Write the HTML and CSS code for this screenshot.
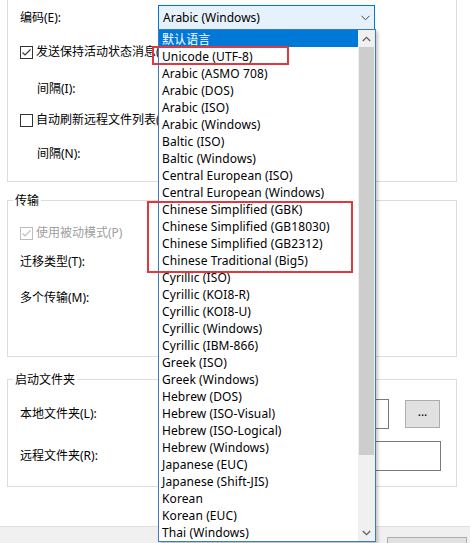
FILE: index.html
```html
<!DOCTYPE html>
<html lang="zh-CN">
<head>
<meta charset="utf-8">
<title>选项</title>
<link rel="stylesheet" href="styles.css">
</head>
<body>
<div class="dialog">
  <div class="group group-top">
    <div class="row row-enc">
      <span class="label">编码(E):</span>
      <div class="combo">
        <span class="combo-text">Arabic (Windows)</span>
        <svg class="combo-arrow" width="9" height="6" viewBox="0 0 9 6"><polyline points="0.5,0.8 4.5,4.8 8.5,0.8" fill="none" stroke="#444" stroke-width="1"/></svg>
      </div>
    </div>
    <div class="row row-b">
      <span class="cb"><svg width="11" height="11" viewBox="0 0 11 11"><polyline points="1.5,5.5 4,8 9.5,2.5" fill="none" stroke="#333" stroke-width="1.1"/></svg></span>
      <span class="cb-text">发送保持活动状态消息(A)</span>
    </div>
    <div class="row row-c indent">间隔(I):</div>
    <div class="row row-d">
      <span class="cb"></span>
      <span class="cb-text">自动刷新远程文件列表(F)</span>
    </div>
    <div class="row row-e indent">间隔(N):</div>
  </div>

  <fieldset class="group fs fs-transfer">
    <legend>传输</legend>
    <div class="row row-p">
      <span class="cb cb-disabled"><svg width="11" height="11" viewBox="0 0 11 11"><polyline points="1.5,5.5 4,8 9.5,2.5" fill="none" stroke="#bcbcbc" stroke-width="1.1"/></svg></span>
      <span class="cb-text disabled">使用被动模式(P)</span>
    </div>
    <div class="row row-t">迁移类型(T):</div>
    <div class="row row-m">多个传输(M):</div>
  </fieldset>

  <fieldset class="group fs fs-folder">
    <legend>启动文件夹</legend>
    <div class="row row-l">
      <span class="label">本地文件夹(L):</span>
      <div class="input input-local"></div>
      <div class="btn-browse">...</div>
    </div>
    <div class="row row-r">
      <span class="label">远程文件夹(R):</span>
      <div class="input input-remote"></div>
    </div>
  </fieldset>

  <div class="footer">
    <div class="btn-foot"></div>
  </div>
</div>

<div class="droplist">
  <ul class="items">
    <li class="sel">默认语言</li>
    <li>Unicode (UTF-8)</li>
    <li>Arabic (ASMO 708)</li>
    <li>Arabic (DOS)</li>
    <li>Arabic (ISO)</li>
    <li>Arabic (Windows)</li>
    <li>Baltic (ISO)</li>
    <li>Baltic (Windows)</li>
    <li>Central European (ISO)</li>
    <li>Central European (Windows)</li>
    <li>Chinese Simplified (GBK)</li>
    <li>Chinese Simplified (GB18030)</li>
    <li>Chinese Simplified (GB2312)</li>
    <li>Chinese Traditional (Big5)</li>
    <li>Cyrillic (ISO)</li>
    <li>Cyrillic (KOI8-R)</li>
    <li>Cyrillic (KOI8-U)</li>
    <li>Cyrillic (Windows)</li>
    <li>Cyrillic (IBM-866)</li>
    <li>Greek (ISO)</li>
    <li>Greek (Windows)</li>
    <li>Hebrew (DOS)</li>
    <li>Hebrew (ISO-Visual)</li>
    <li>Hebrew (ISO-Logical)</li>
    <li>Hebrew (Windows)</li>
    <li>Japanese (EUC)</li>
    <li>Japanese (Shift-JIS)</li>
    <li>Korean</li>
    <li>Korean (EUC)</li>
    <li>Thai (Windows)</li>
  </ul>
  <div class="scrollbar">
    <div class="sb-btn"><svg width="9" height="6" viewBox="0 0 9 6"><polyline points="0.8,5 4.5,1.3 8.2,5" fill="none" stroke="#606060" stroke-width="1.3"/></svg></div>
    <div class="sb-track"><div class="sb-thumb"></div></div>
    <div class="sb-btn"><svg width="9" height="6" viewBox="0 0 9 6"><polyline points="0.8,1 4.5,4.7 8.2,1" fill="none" stroke="#606060" stroke-width="1.3"/></svg></div>
  </div>
</div>

<div class="mark mark-utf8"></div>
<div class="mark mark-chinese"></div>
</body>
</html>
```

FILE: styles.css
```css
* { box-sizing: border-box; }
html, body {
  margin: 0;
  padding: 0;
}
body {
  width: 470px;
  height: 543px;
  overflow: hidden;
  background: #fff;
  font-family: "Noto Sans", "Noto Sans CJK SC", sans-serif;
  font-size: 12px;
  color: #000;
  position: relative;
}
.dialog {
  display: flex;
  flex-direction: column;
  height: 543px;
}
.group {
  margin: 0 0 0 7px;
  width: 450px;
  border: 1px solid #dcdcdc;
}
.group-top {
  border-top: none;
  padding: 0 0 17px 12px;
}
.row {
  display: flex;
  align-items: center;
  height: 20px;
  line-height: 20px;
  white-space: nowrap;
}
.label {
  width: 138px;
  flex: none;
}
.row-enc { margin-top: 5px; height: 25px; }
.row-b { margin-top: 12px; }
.row-c { margin-top: 17px; }
.row-d { margin-top: 11px; }
.row-e { margin-top: 14px; }
.indent { padding-left: 17px; }

.combo {
  width: 217px;
  height: 25px;
  border: 1px solid #0078d7;
  background: #e5f1fb;
  display: flex;
  align-items: center;
  justify-content: space-between;
  padding: 0 4px 0 4px;
}

.cb {
  width: 13px;
  height: 13px;
  border: 1px solid #333;
  background: #fff;
  flex: none;
  display: flex;
  align-items: center;
  justify-content: center;
}
.cb-disabled { border-color: #bcbcbc; }
.cb-text { margin-left: 3px; }
.disabled { color: #a0a0a0; }

.fs {
  padding: 0;
  min-width: 0;
}
.fs legend {
  margin-left: 5px;
  padding: 0 2px;
  line-height: 17px;
  height: 17px;
}
.fs .row { padding-left: 12px; }
.fs-transfer { margin-top: 10px; padding-bottom: 48px; }
.row-p { margin-top: 14px; }
.row-t { margin-top: 9px; }
.row-m { margin-top: 16px; }

.fs-folder { margin-top: 14px; padding-bottom: 15px; }
.row-l { margin-top: 11px; height: 30px; }
.row-r { margin-top: 12px; height: 30px; }
.fs .label { width: 141px; }
.input {
  height: 30px;
  border: 1px solid #7a7a7a;
  background: #fff;
}
.input-local { width: 228px; }
.input-remote { width: 280px; }
.btn-browse {
  margin-left: 16px;
  width: 35px;
  height: 28px;
  border: 1px solid #adadad;
  background: #e1e1e1;
  text-align: center;
  line-height: 22px;
  font-size: 12px;
}

.footer {
  margin-top: auto;
  height: 17px;
  border-top: 1px solid #dfdfdf;
  background: #f0f0f0;
  padding: 10px 0 0 387px;
}
.btn-foot {
  width: 80px;
  height: 23px;
  border: 1px solid #adadad;
  background: #e1e1e1;
}

.droplist {
  position: absolute;
  left: 158px;
  top: 29px;
  width: 218px;
  height: 513px;
  border: 1px solid #3a7cbf;
  background: #fff;
  display: flex;
  box-shadow: 2px 2px 3px rgba(0, 0, 0, 0.22);
}
.items {
  list-style: none;
  margin: 0;
  padding: 0;
  flex: 1;
}
.items li {
  height: 17px;
  line-height: 17px;
  padding: 1px 0 0 3px;
  white-space: nowrap;
  letter-spacing: 0.1px;
}
.items li.sel {
  background: #0078d7;
  color: #fff;
}
.scrollbar {
  width: 17px;
  flex: none;
  background: #f0f0f0;
  display: flex;
  flex-direction: column;
}
.sb-btn {
  height: 17px;
  flex: none;
  display: flex;
  align-items: center;
  justify-content: center;
}
.sb-track {
  flex: 1;
  padding: 0 1px;
}
.sb-thumb {
  height: 408px;
  background: #cdcdcd;
}

.mark {
  position: absolute;
  border: 2px solid #e2373e;
}
.mark-utf8 {
  left: 152px;
  top: 46px;
  width: 137px;
  height: 19px;
}
.mark-chinese {
  left: 147px;
  top: 201px;
  width: 206px;
  height: 72px;
}
```
